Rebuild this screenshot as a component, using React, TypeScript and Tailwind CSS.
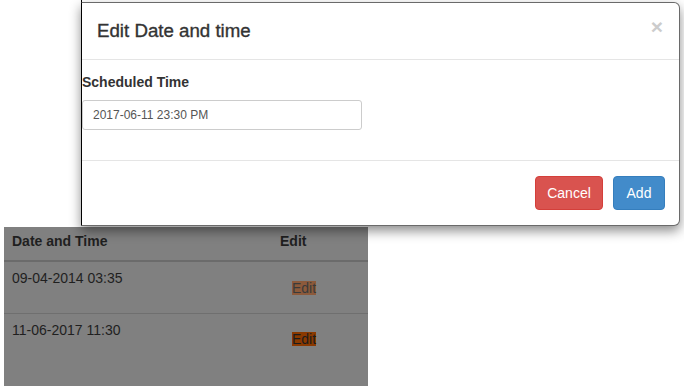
import React from 'react';

const rows = [
  { when: '09-04-2014 03:35', btn: 'bg-[#8c5a3b] text-[#3a3a3a]' },
  { when: '11-06-2017 11:30', btn: 'bg-[#8a3900] text-[#1c1c1c]' },
];

const App: React.FC = () => {
  return (
    <main className="relative w-[684px] h-[386px] overflow-hidden bg-white text-[#333] font-['Liberation_Sans',Arial,sans-serif]">
      {/* table behind the backdrop */}
      <section className="ml-[4px] mt-[227px] w-[364px] h-[159px] bg-[#808080] text-[14px] leading-[20px] text-[#1f1f1f]">
        <div className="flex h-[35px] border-b-2 border-[#6b6b6b] pt-[4px] font-bold">
          <div className="w-[268px] pl-[8px]">Date and Time</div>
          <div className="pl-[8px]">Edit</div>
        </div>
        {rows.map((r, i) => (
          <div key={r.when} className={`flex ${i === 0 ? 'h-[52px] border-b border-[#6f6f6f]' : 'h-[52px]'}`}>
            <div className="w-[268px] pl-[8px] pt-[6px]">{r.when}</div>
            <div className={`pl-[20px] ${i === 0 ? 'pt-[19px]' : 'pt-[18px]'}`}>
              <span className={`block leading-[14px] ${r.btn}`}>Edit</span>
            </div>
          </div>
        ))}
      </section>

      {/* modal */}
      <div className="absolute left-[81px] top-0 w-px h-[3px] bg-black" />
      <div className="absolute left-[81px] top-[2px] w-[599px] bg-white border border-[#6a6a6a] border-l-black rounded-r-[6px] shadow-[0_5px_12px_rgba(0,0,0,0.45)]">
        <div className="flex items-start justify-between pl-[15px] pr-[16px] py-[15px] border-b border-[#e5e5e5]">
          <h4 className="text-[18.7px] leading-[26px] font-normal text-[#333] [-webkit-text-stroke:0.35px_#333]">Edit Date and time</h4>
          <span className="text-[21px] leading-[22px] font-bold text-[#cccccc] -mt-[2px]">×</span>
        </div>
        <div className="pt-[12px] pb-[30px]">
          <label className="block text-[14px] leading-[20px] font-bold text-[#333] mb-[8px]">Scheduled Time</label>
          <div className="w-[280px] h-[30px] border border-[#ccc] rounded-[3px] pl-[10px] flex items-center text-[12px] text-[#555]">
            2017-06-11 23:30 PM
          </div>
        </div>
        <div className="flex justify-end gap-[10px] pt-[15px] pb-[15px] pr-[14px] border-t border-[#e5e5e5]">
          <button className="w-[68px] h-[34px] rounded-[4px] bg-[#d9534f] border border-[#d43f3a] text-white text-[14px]">Cancel</button>
          <button className="w-[52px] h-[34px] rounded-[4px] bg-[#428bca] border border-[#357ebd] text-white text-[14px]">Add</button>
        </div>
      </div>
    </main>
  );
};

export default App;
